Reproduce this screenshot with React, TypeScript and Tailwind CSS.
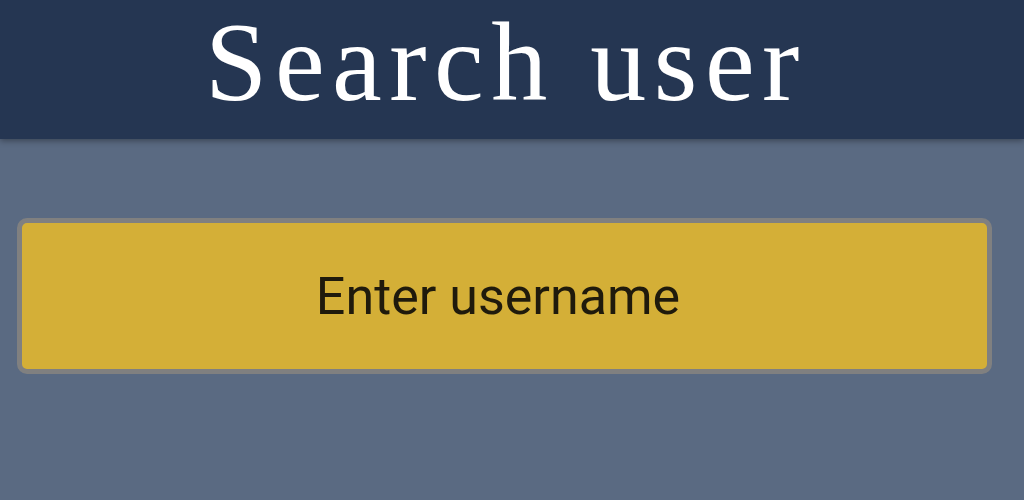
export default function App() {
    return (
        <div className="min-h-[500px] w-full bg-[#5a6a82] font-['Roboto',sans-serif]">
            {/* Header */}
            <header className="flex h-[139px] items-center justify-center bg-[#253652] shadow-[0_2px_6px_rgba(0,0,0,0.35)]">
                <h1 className="pb-[16px] pr-[12px] font-['Liberation_Serif',serif] text-[112px] leading-none tracking-[7.5px] text-white">
                    Search user
                </h1>
            </header>

            {/* Search input */}
            <div className="pt-[79px] pl-[17px]">
                <input
                    type="text"
                    placeholder="Enter username"
                    className="h-[156px] w-[975px] rounded-[10px] border-[5px] border-[#808080] bg-[#d4af37] pr-[13px] text-center text-[52px] text-[#1f1a0c] outline-none placeholder:text-[#1f1a0c]"
                />
            </div>
        </div>
    );
}
